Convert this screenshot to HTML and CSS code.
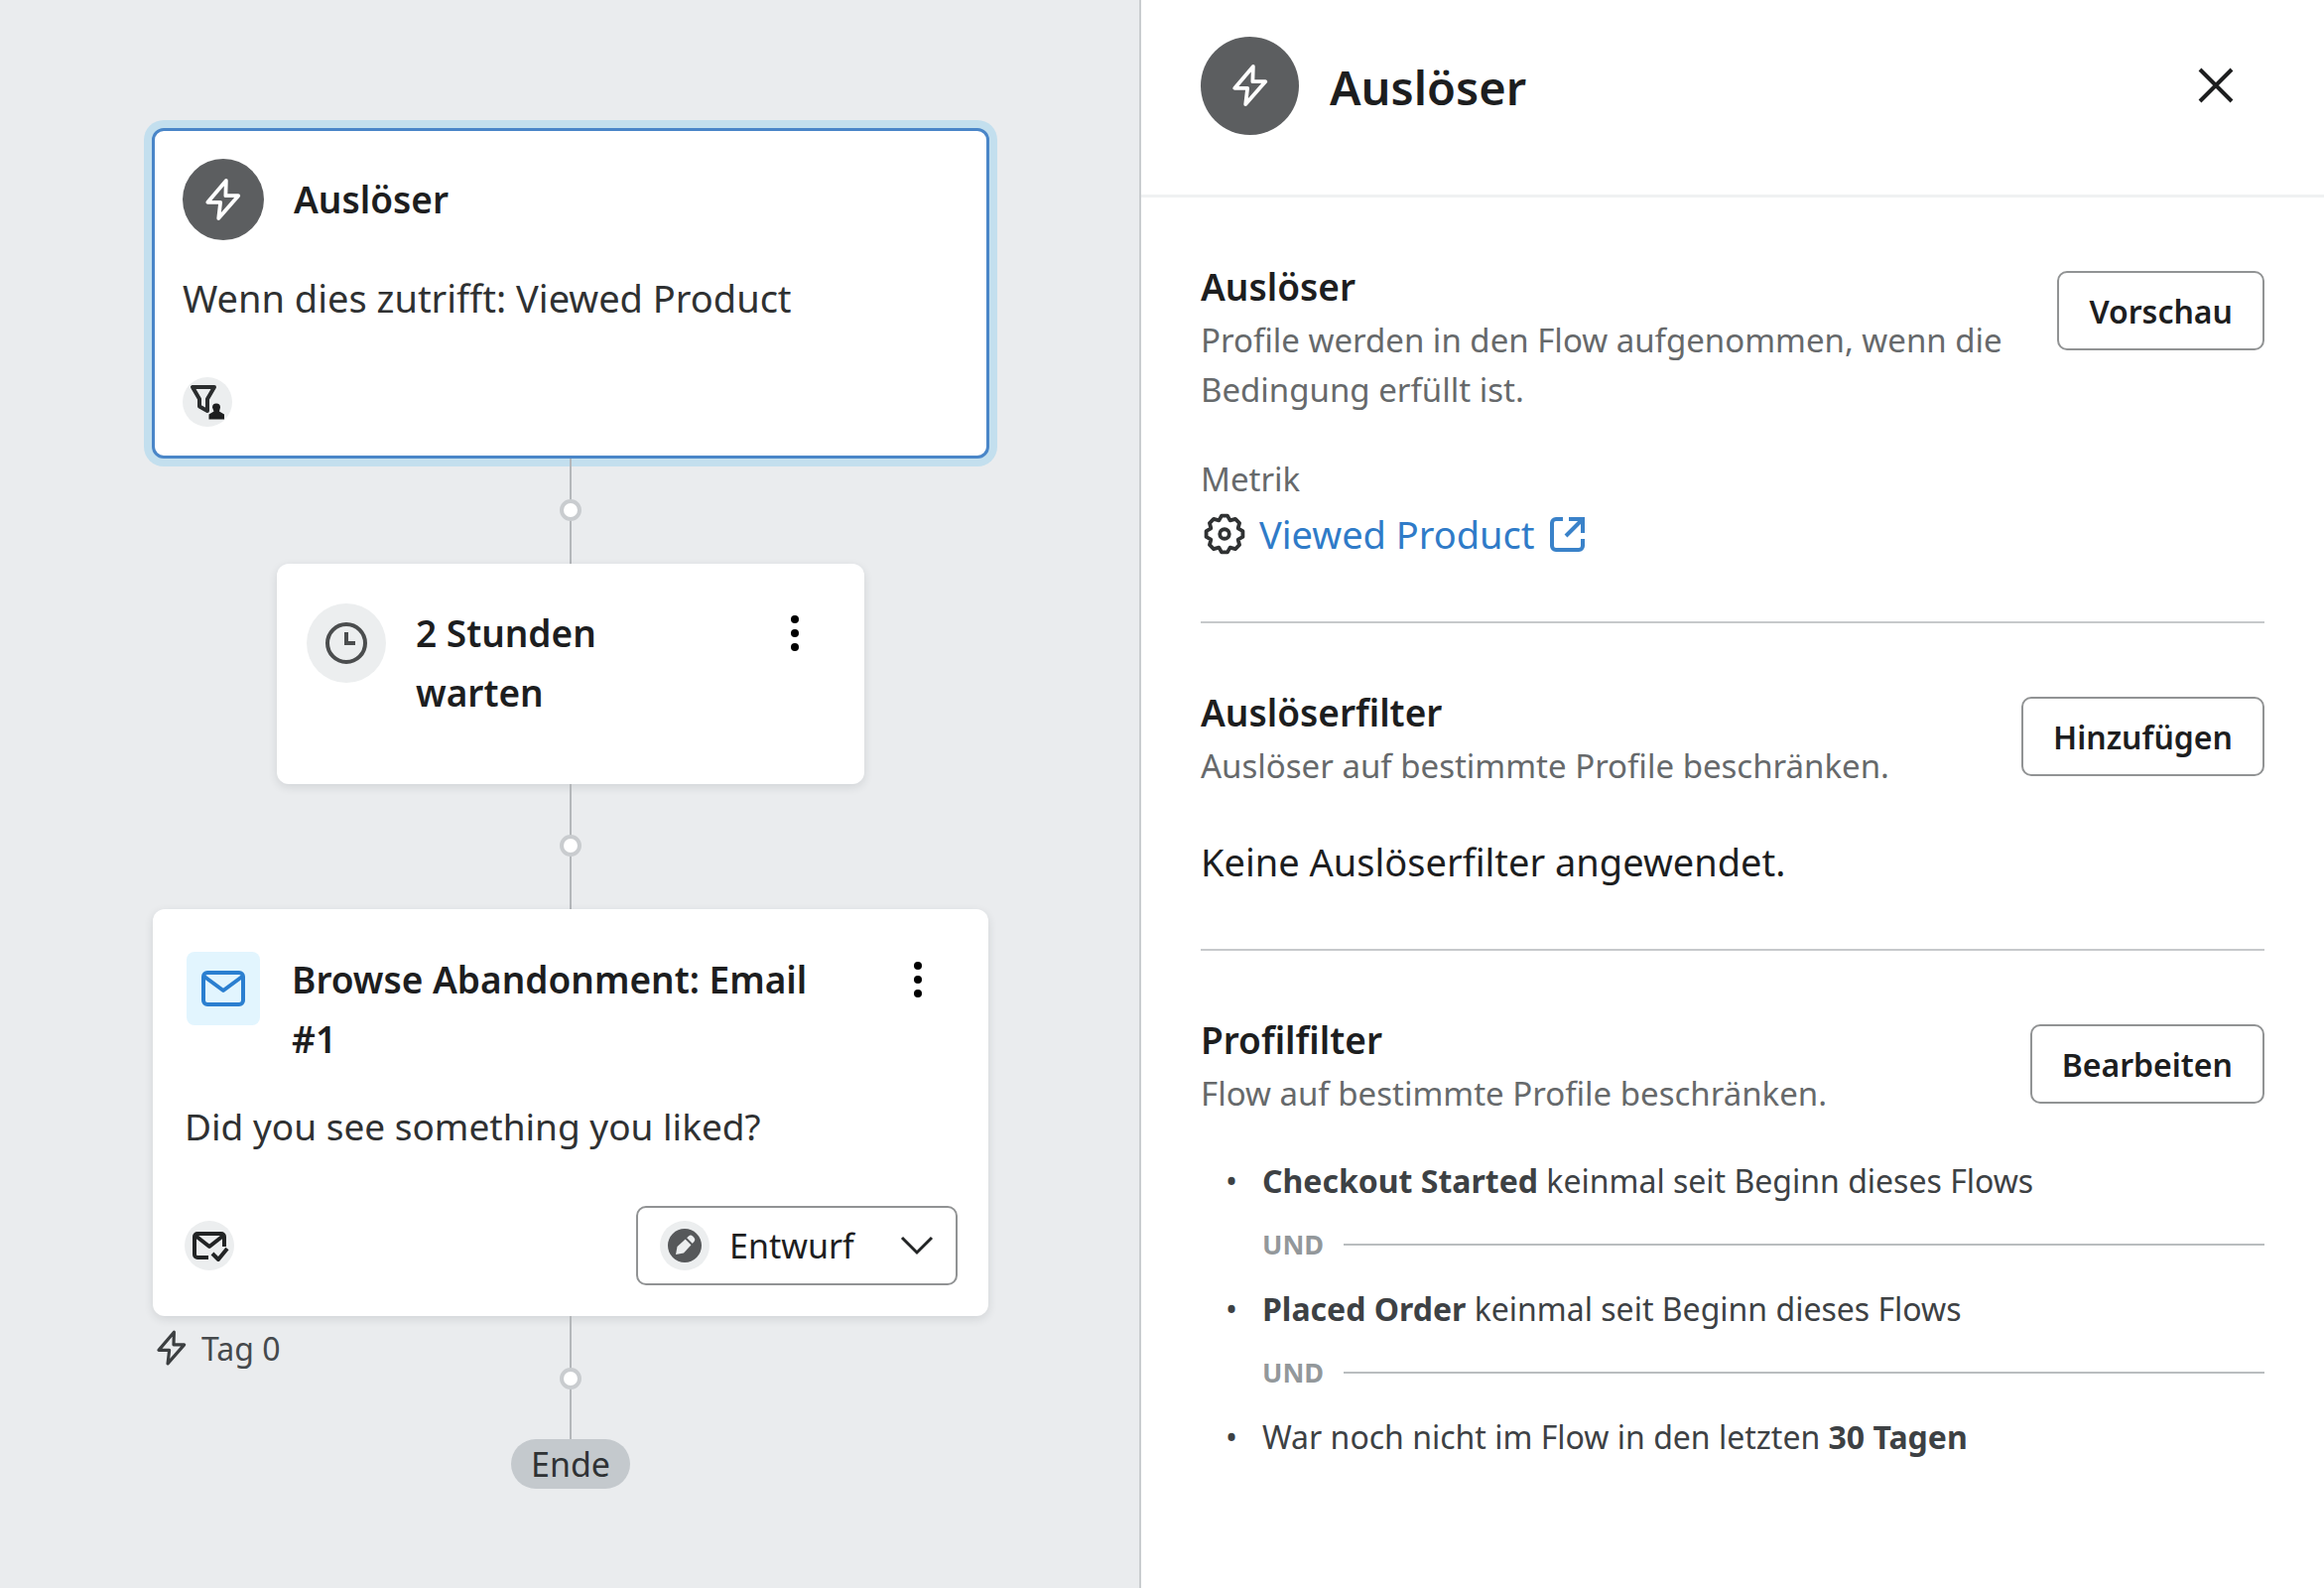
FILE: index.html
```html
<!DOCTYPE html>
<html lang="de">
<head>
<meta charset="utf-8">
<title>Flow</title>
<link rel="stylesheet" href="styles.css">
</head>
<body>
<svg class="sprite" aria-hidden="true">
  <symbol id="bolt" viewBox="0 0 40 48"><path d="M23 4 3.500 27H17l-2 17L36 20H22.500z" fill="none" stroke="currentColor" stroke-width="4" stroke-linejoin="round"/></symbol>
  <symbol id="dots" viewBox="0 0 12 40"><circle cx="6" cy="6" r="4"/><circle cx="6" cy="20" r="4"/><circle cx="6" cy="34" r="4"/></symbol>
</svg>
<div class="app">
  <main class="canvas">
    <section class="card card-selected">
      <div class="card-head">
        <span class="badge badge-dark"><svg class="bolt-large"><use href="#bolt"/></svg></span>
        <h2 class="card-title">Auslöser</h2>
      </div>
      <p class="card-text">Wenn dies zutrifft: Viewed Product</p>
      <span class="chip">
        <svg viewBox="0 0 50 50" width="50" height="50"><path d="M10 10h22l-7 12v12l-8-4.500V22z" fill="none" stroke="#2b2d2e" stroke-width="4" stroke-linejoin="round"/><path d="M34 26.500a4 4 0 0 1 4 4l-1 4 5 3v5H26.500v-5l5-3-1.500-4a4 4 0 0 1 4-4z" fill="#1d1e1f"/></svg>
      </span>
    </section>

    <div class="link link-short"><span class="joint"></span></div>

    <section class="card card-wait">
      <div class="card-head card-head-top">
        <span class="badge badge-light"><svg viewBox="0 0 44 44" width="44" height="44" fill="none" stroke="#4b4d4e" stroke-width="4"><circle cx="22" cy="22" r="19"/><path d="M22 11v11h9"/></svg></span>
        <h2 class="card-title">2 Stunden warten</h2>
        <button class="menu" type="button" aria-label="Mehr"><svg><use href="#dots"/></svg></button>
      </div>
    </section>

    <div class="link link-long"><span class="joint"></span></div>

    <section class="card card-mail">
      <div class="card-head card-head-top">
        <span class="tile"><svg viewBox="0 0 44 36" width="44" height="36" fill="none" stroke="#2b7fd0" stroke-width="4" stroke-linejoin="round"><rect x="2" y="2" width="40" height="32" rx="4"/><path d="m3 6 19 14L41 6"/></svg></span>
        <h2 class="card-title">Browse Abandonment: Email #1</h2>
        <button class="menu" type="button" aria-label="Mehr"><svg><use href="#dots"/></svg></button>
      </div>
      <p class="card-text">Did you see something you liked?</p>
      <div class="card-foot">
        <span class="chip">
          <svg viewBox="0 0 50 50" width="50" height="50" fill="none" stroke="#222425" stroke-width="4" stroke-linejoin="round"><path d="M24 37H13a3 3 0 0 1-3-3V16a3 3 0 0 1 3-3h24a3 3 0 0 1 3 3v10"/><path d="m11 15 14 11 14-11"/><path d="m28 33 6 6 9-11"/></svg>
        </span>
        <div class="status">
          <span class="chip"><svg viewBox="0 0 50 50" width="50" height="50"><circle cx="25" cy="25" r="17" fill="#56585a"/><path d="m16 34 1.500-8L29 15.500a3 3 0 0 1 4 0l1.500 1.500a3 3 0 0 1 0 4L24 32.500z" fill="#eceeef"/><path d="m26 17.500 7 7" stroke="#56585a" stroke-width="2"/></svg></span>
          <select class="status-select" aria-label="Status"><option>Entwurf</option></select>
          <svg class="status-arrow" viewBox="0 0 34 20" width="34" height="20"><path d="m2 2 15 15L32 2" fill="none" stroke="#222425" stroke-width="3"/></svg>
        </div>
      </div>
    </section>

    <div class="tail">
      <p class="tag"><svg class="bolt-small"><use href="#bolt"/></svg>Tag 0</p>
      <div class="link link-tail"><span class="joint"></span></div>
    </div>
    <span class="end">Ende</span>
  </main>

  <aside class="panel">
    <header class="panel-head">
      <span class="badge badge-dark badge-large"><svg class="bolt-large"><use href="#bolt"/></svg></span>
      <h1 class="panel-title">Auslöser</h1>
      <button class="close" type="button" aria-label="Schließen"><svg viewBox="0 0 36 36" width="36" height="36"><path d="m2 2 32 32M34 2 2 34" stroke="#1d1e1f" stroke-width="4"/></svg></button>
    </header>
    <div class="panel-body">
      <section class="block">
        <div class="block-head">
          <div>
            <h2 class="block-title">Auslöser</h2>
            <p class="block-desc">Profile werden in den Flow aufgenommen, wenn die Bedingung erfüllt ist.</p>
          </div>
          <button class="btn" type="button">Vorschau</button>
        </div>
        <p class="block-label">Metrik</p>
        <p class="metric">
          <svg viewBox="0 0 44 44" width="42" height="42" fill="none" stroke="#303233" stroke-width="4" stroke-linejoin="round"><path d="M41.300 18.900V25.100L36.300 27.900 37.800 33.450 33.450 37.800 27.900 36.300 25.100 41.300H18.900L16.100 36.300 10.550 37.800 6.200 33.450 7.700 27.900 2.700 25.100V18.900L7.700 16.100 6.200 10.550 10.550 6.200 16.100 7.700 18.900 2.700H25.100L27.900 7.700 33.450 6.200 37.800 10.550 36.300 16.100z"/><circle cx="22" cy="22" r="5"/></svg>
          <a class="metric-link" href="#">Viewed Product
            <svg viewBox="0 0 38 38" width="38" height="38" fill="none" stroke="#3a82c9" stroke-width="4"><path d="M14 4H7a4 4 0 0 0-4 4v23a4 4 0 0 0 4 4h23a4 4 0 0 0 4-4v-7M20 4h14v14M34 4 17 21"/></svg>
          </a>
        </p>
      </section>

      <section class="block">
        <div class="block-head">
          <div>
            <h2 class="block-title">Auslöserfilter</h2>
            <p class="block-desc">Auslöser auf bestimmte Profile beschränken.</p>
          </div>
          <button class="btn" type="button">Hinzufügen</button>
        </div>
        <p class="block-note">Keine Auslöserfilter angewendet.</p>
      </section>

      <section class="block">
        <div class="block-head">
          <div>
            <h2 class="block-title">Profilfilter</h2>
            <p class="block-desc">Flow auf bestimmte Profile beschränken.</p>
          </div>
          <button class="btn" type="button">Bearbeiten</button>
        </div>
        <ul class="rules">
          <li><strong>Checkout Started</strong> keinmal seit Beginn dieses Flows<div class="and">UND</div></li>
          <li><strong>Placed Order</strong> keinmal seit Beginn dieses Flows<div class="and">UND</div></li>
          <li>War noch nicht im Flow in den letzten <strong>30 Tagen</strong></li>
        </ul>
      </section>
    </div>
  </aside>
</div>
</body>
</html>
```
FILE: styles.css
```css
* { box-sizing: border-box; }
body, h1, h2, p, ul { margin: 0; }
body { font-family: "Noto Sans", sans-serif; color: #1d1e1f; background: #fff; }
button, select { font: inherit; color: inherit; }
svg { display: block; flex: none; }
.sprite { position: absolute; width: 0; height: 0; }

.app { display: grid; grid-template-columns: 1150fr 1192fr; min-height: 100vh; }

.canvas {
  display: flex; flex-direction: column; align-items: center;
  padding: 129px 22px 96px 24px;
  background: #eaecee; border-right: 2px solid #c9cccf;
}
.card {
  width: 100%; max-width: 842px; background: #fff; border-radius: 12px;
  box-shadow: 0 3px 10px rgba(30, 40, 50, .12);
}
.card-selected {
  max-width: 844px; height: 333px; padding: 28px 28px 0;
  border: 3px solid #4a86c8; box-shadow: 0 0 0 8px #c3dfee;
}
.card-wait { max-width: 592px; min-height: 222px; padding: 40px 30px; }
.card-mail { min-height: 410px; padding: 41px 31px 0 32px; }
.card-head { display: flex; align-items: center; gap: 30px; }
.card-head-top { align-items: flex-start; }
.card-title { font-size: 37px; font-weight: 600; line-height: 60px; }
.card-wait .card-title { flex: 1; max-width: 240px; }
.card-mail .card-title { flex: 1; max-width: 560px; }
.card-text { font-size: 38px; line-height: 60px; color: #2f3132; margin-top: 28px; }
.card-mail .card-text { font-size: 37px; }
.card-selected .chip { margin-top: 50px; }

.badge {
  flex: none; display: grid; place-items: center;
  width: 82px; height: 82px; border-radius: 50%;
}
.badge-dark { background: #5c5e60; color: #fff; }
.badge-large { width: 99px; height: 99px; }
.badge-light { width: 80px; height: 80px; background: #eceeef; }
.bolt-large { width: 38px; height: 46px; }
.bolt-small { width: 32px; height: 38px; color: #3c3f41; }
.tile {
  flex: none; display: grid; place-items: center;
  width: 74px; height: 74px; margin: 2px 2px 0; border-radius: 8px; background: #e2f5fe;
}
.chip { flex: none; display: block; width: 50px; height: 50px; border-radius: 50%; background: #eceeef; }

.menu { margin-left: auto; padding: 0; border: 0; background: none; width: 80px; height: 60px; display: grid; place-items: center; }
.menu svg { width: 12px; height: 40px; }

.link {
  display: flex; justify-content: center; align-items: flex-start; width: 22px;
  background: linear-gradient(#b4b7ba, #b4b7ba) center / 2px 100% no-repeat;
}
.link-short { height: 106px; padding-top: 41px; }
.link-long { height: 126px; padding-top: 51px; }
.link-tail { height: 124px; padding-top: 52px; }
.joint { width: 22px; height: 22px; border: 4px solid #c9cccf; border-radius: 50%; background: #fff; }

.card-foot { display: flex; align-items: center; justify-content: space-between; margin-top: 50px; }
.status { display: grid; grid-template-columns: 24px 50px 1fr 34px 24px; align-items: center; width: 324px; }
.status-select {
  grid-area: 1 / 1 / 2 / 6; width: 100%; height: 80px; padding: 0 0 0 92px;
  appearance: none; border: 2px solid #919394; border-radius: 10px; background: none;
  font-size: 34px;
}
.status .chip { grid-area: 1 / 2; }
.status-arrow { grid-area: 1 / 4; }

.tail { display: grid; grid-template-columns: 1fr auto 1fr; width: 100%; max-width: 842px; }
.tag { display: flex; align-items: center; gap: 14px; height: 64px; padding-left: 3px; font-size: 32px; color: #45494c; }
.end { padding: 0 20px; border-radius: 25px; background: #c4c9cd; font-size: 34px; line-height: 50px; color: #2f3234; }

.panel-head {
  display: flex; align-items: center; gap: 31px;
  height: 199px; padding: 0 91px 24px 60px; border-bottom: 3px solid #eff1f2;
}
.panel-title { padding-top: 4px; font-size: 47px; font-weight: 600; }
.close { margin-left: auto; padding: 0; border: 0; background: none; }
.panel-body { padding: 0 60px; }
.block { padding: 64px 0 58px; border-bottom: 2px solid #c6c9cb; }
.block:last-child { border-bottom: 0; }
.block-head { display: flex; justify-content: space-between; align-items: flex-start; gap: 40px; }
.block-title { margin-bottom: 3px; font-size: 37px; font-weight: 600; line-height: 52px; }
.block-desc { font-size: 33px; line-height: 50px; color: #66696b; }
.block-label { margin-top: 40px; font-size: 33px; line-height: 50px; color: #66696b; }
.block-note { margin-top: 41px; font-size: 38px; line-height: 60px; }
.btn {
  flex: none; height: 80px; margin-top: 10px; padding: 0 30px;
  border: 2px solid #919394; border-radius: 10px; background: #fff;
  font-size: 32px; font-weight: 600;
}
.metric { display: flex; align-items: center; gap: 14px; padding-left: 3px; font-size: 38px; line-height: 60px; }
.metric-link { display: flex; align-items: center; gap: 14px; color: #2f7bc8; text-decoration: none; }
.rules { margin-top: 30px; padding-left: 62px; list-style-type: "•\00a0\00a0\00a0"; font-size: 32px; line-height: 65px; color: #3d4144; }
.and { display: flex; align-items: center; gap: 20px; font-size: 27px; font-weight: 700; line-height: 64px; color: #93989b; }
.and::after { content: ""; flex: 1; height: 2px; background: #b9bdbf; }
```
